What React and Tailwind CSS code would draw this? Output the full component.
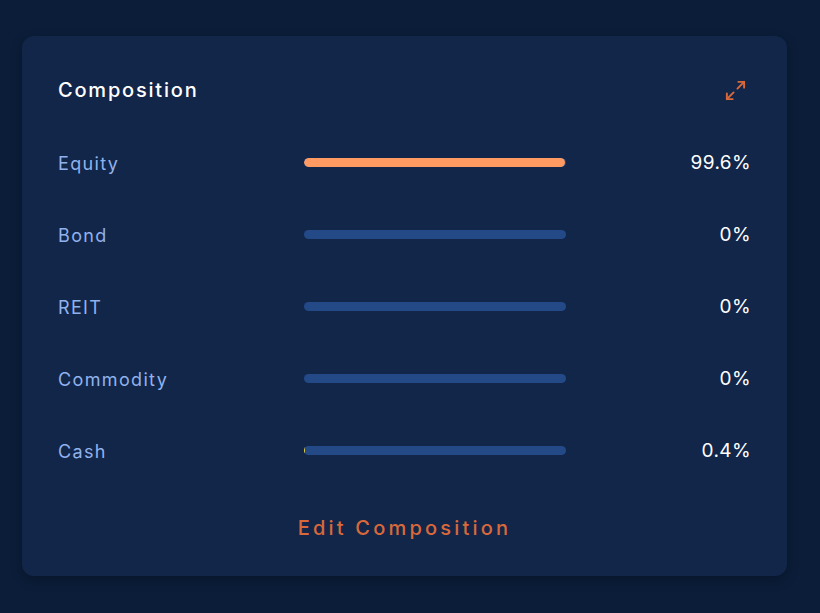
import { Maximize2 } from "lucide-react";

const rows = [
  { label: "Equity", value: "99.6%", pct: 99.6 },
  { label: "Bond", value: "0%", pct: 0 },
  { label: "REIT", value: "0%", pct: 0 },
  { label: "Commodity", value: "0%", pct: 0 },
  { label: "Cash", value: "0.4%", pct: 0.4 },
];

function Bar({ pct, label }) {
  const fill = label === "Cash" ? "bg-[#e6d24a]" : "bg-[#ff9a63]";
  return (
    <div className="relative h-[9px] w-full overflow-hidden rounded-full bg-[#234a87]">
      {pct > 0 && (
        <div
          className={`h-full ${fill} ${label === "Cash" ? "" : "rounded-full"}`}
          style={{ width: `${pct}%` }}
        />
      )}
    </div>
  );
}

export default function App() {
  return (
    <div
      className="min-h-screen bg-[#0b1d39] px-[22px] pt-9"
      style={{ fontFamily: "Inter, 'Open Sans', sans-serif" }}
    >
      <div className="w-[765px] rounded-xl bg-[#12264a] px-9 pt-[18px] pb-2 shadow-[0_4px_12px_rgba(0,0,0,0.25)]">
        <div className="flex h-[72px] items-center justify-between">
          <h2 className="text-[20px] font-medium tracking-[0.09em] text-white">
            Composition
          </h2>
          <button className="mr-[4px] text-[#d9693a]">
            <Maximize2 size={23} strokeWidth={2} />
          </button>
        </div>

        {rows.map((r) => (
          <div
            key={r.label}
            className="grid h-[72px] grid-cols-[246px_262px_1fr] items-center"
          >
            <span className="pt-0.5 text-[18px] tracking-[0.075em] text-[#8fb2ec]">
              {r.label}
            </span>
            <Bar pct={r.pct} label={r.label} />
            <span className="pt-0.5 text-right text-[19px] tracking-[0.02em] text-white">
              {r.value}
            </span>
          </div>
        ))}

        <div className="flex h-[82px] items-center justify-center">
          <button className="pt-0.5 text-[20px] font-medium tracking-[0.16em] text-[#d9693a]">
            Edit Composition
          </button>
        </div>
      </div>
    </div>
  );
}
